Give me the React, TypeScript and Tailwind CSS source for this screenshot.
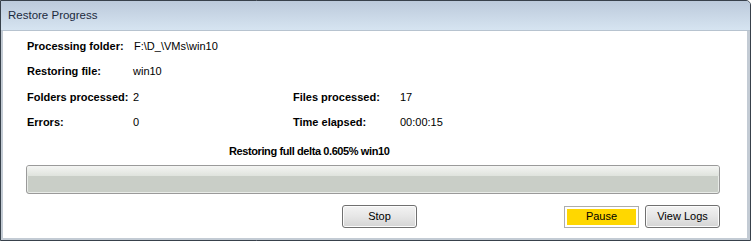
import React from 'react';

const font = { fontFamily: '"Liberation Sans", Arial, sans-serif' };

const Row: React.FC<{ h: string; children: React.ReactNode }> = ({ h, children }) => (
  <div className={`flex items-center ${h}`}>{children}</div>
);

const WinButton: React.FC<{ label: string }> = ({ label }) => (
  <button className="w-[75px] h-[23px] rounded-[3px] border border-[#707070] bg-gradient-to-b from-[#f3f3f3] via-[#e6e6e6] to-[#d4d4d4] text-[11px] text-black shadow-[inset_0_0_0_1px_#fcfcfc] flex items-center justify-center">
    {label}
  </button>
);

export default function App() {
  return (
    <div className="w-[751px] h-[241px] bg-[#c3cbd4] border border-[#38414b] rounded-tr-[5px] flex flex-col overflow-hidden" style={font}>
      {/* title bar */}
      <div className="h-[30px] shrink-0 bg-gradient-to-b from-[#bccadb] to-[#d6e4f1] border-b border-[#b7c3cf] flex items-center pl-[7px]">
        <span className="text-[11.5px] text-[#1b2a3d] pt-[1px]">Restore Progress</span>
      </div>

      {/* content */}
      <div className="flex-1 bg-white ml-[2px] mr-[3px] mb-[2px] flex flex-col pt-[3px] text-[11px] text-black">
        <div className="pl-[24px]">
          <Row h="h-[25px]">
            <span className="w-[106px] font-bold">Processing folder:</span>
            <span className="pl-[1px]">F:\D_\VMs\win10</span>
          </Row>
          <Row h="h-[25px]">
            <span className="w-[106px] font-bold">Restoring file:</span>
            <span>win10</span>
          </Row>
          <Row h="h-[26px]">
            <span className="w-[106px] font-bold whitespace-nowrap">Folders processed:</span>
            <span className="w-[160px]">2</span>
            <span className="w-[107px] font-bold">Files processed:</span>
            <span>17</span>
          </Row>
          <Row h="h-[25px]">
            <span className="w-[106px] font-bold">Errors:</span>
            <span className="w-[160px]">0</span>
            <span className="w-[107px] font-bold">Time elapsed:</span>
            <span>00:00:15</span>
          </Row>
        </div>

        <div className="mt-[8px] h-[16px] flex items-center pl-[226px] font-bold tracking-[-0.4px]">
          Restoring full delta 0.605% win10
        </div>

        {/* progress bar */}
        <div className="mt-[6px] ml-[23px] w-[694px] h-[29px] rounded-[3px] border border-[#9a9a9a] bg-[#c9cec7] shadow-[inset_0_0_0_1px_#e9ece8] flex flex-col overflow-hidden">
          <div className="h-[10px] bg-gradient-to-b from-[#f4f5f3] to-[#dfe3dd]" />
        </div>

        {/* buttons */}
        <div className="mt-[11px] flex items-center">
          <div className="ml-[339px]">
            <WinButton label="Stop" />
          </div>
          <button className="ml-[147px] w-[75px] h-[22px] border border-[#adadad] bg-white p-[2px] flex">
            <span className="flex-1 bg-[#ffd700] text-[11px] text-black flex items-center justify-center">Pause</span>
          </button>
          <div className="ml-[6px]">
            <WinButton label="View Logs" />
          </div>
        </div>
      </div>
    </div>
  );
}
